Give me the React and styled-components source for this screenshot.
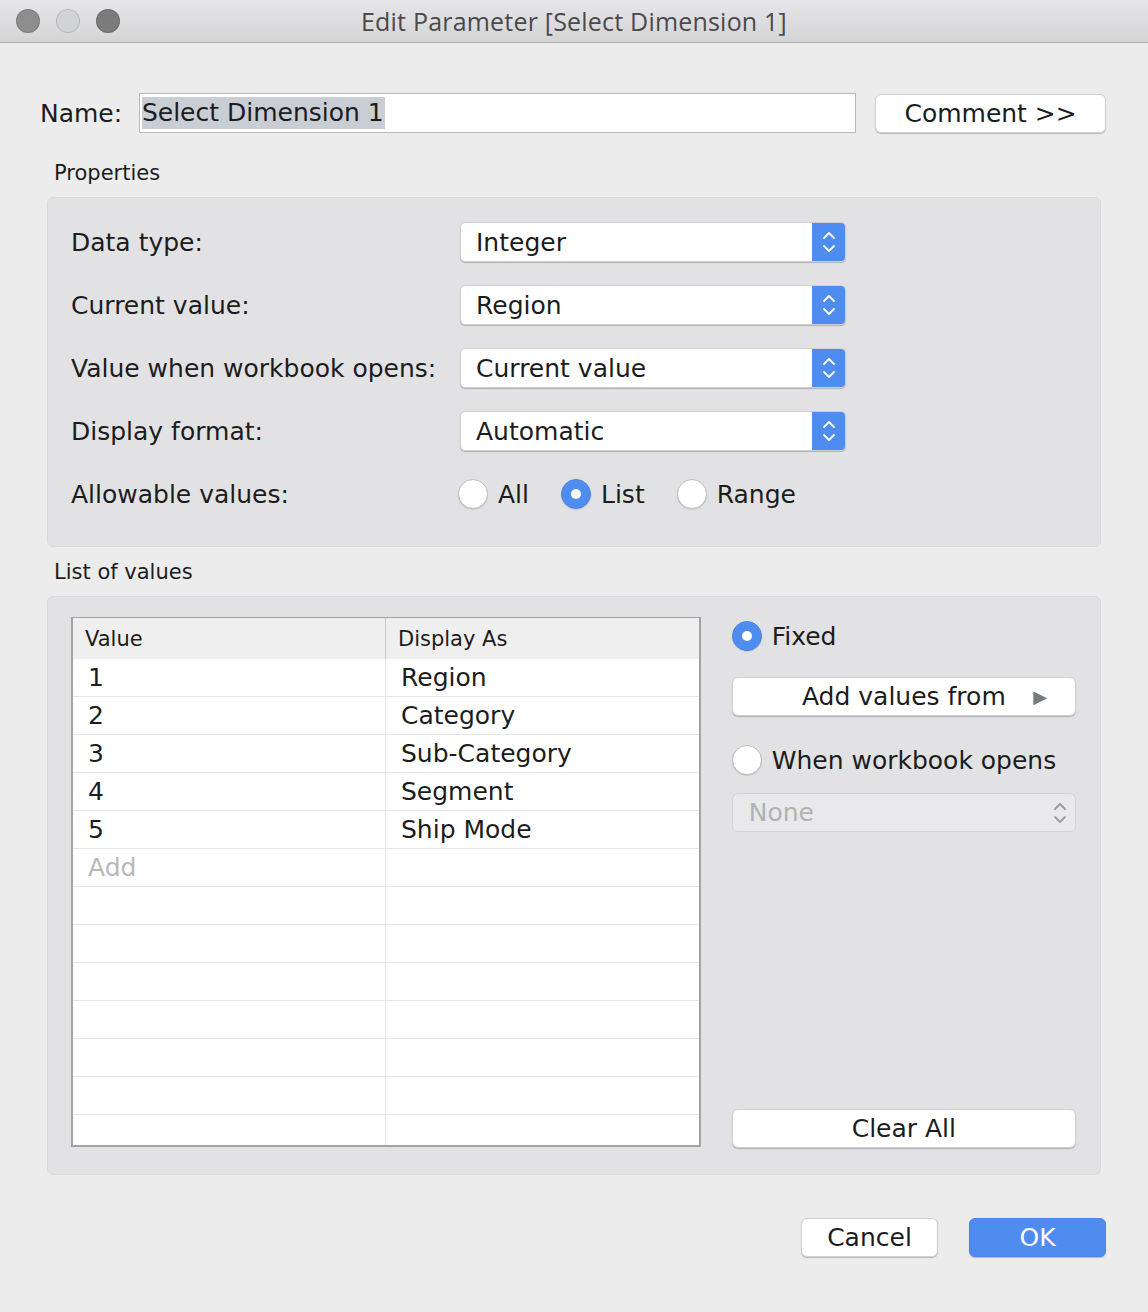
import React from 'react';
import styled, { createGlobalStyle } from 'styled-components';

const GlobalStyle = createGlobalStyle`
  html, body {
    margin: 0;
    padding: 0;
    background: #ececec;
  }
  body {
    font-family: "DejaVu Sans", "Open Sans", sans-serif;
    color: #1c1c1c;
  }
`

const rows = [
  { value: '1', display: 'Region' },
  { value: '2', display: 'Category' },
  { value: '3', display: 'Sub-Category' },
  { value: '4', display: 'Segment' },
  { value: '5', display: 'Ship Mode' },
]

const Chevrons = ({ color }) => (
  <svg width="14" height="26" viewBox="0 0 14 26">
    <path d="M2 9 L7 4 L12 9" fill="none" stroke={color} strokeWidth="1.8" strokeLinecap="round" strokeLinejoin="round" />
    <path d="M2 17 L7 22 L12 17" fill="none" stroke={color} strokeWidth="1.8" strokeLinecap="round" strokeLinejoin="round" />
  </svg>
)

const Select = ({ value }) => (
  <SelectBox>
    <SelectText>{value}</SelectText>
    <Stepper>
      <Chevrons color="#ffffff" />
    </Stepper>
  </SelectBox>
)

const Radio = ({ checked, label }) => (
  <RadioRow>
    <RadioDot checked={checked} />
    <span>{label}</span>
  </RadioRow>
)

const App = () => {
  const empty = Array.from({ length: 7 })

  return (
    <>
      <GlobalStyle />
      <Window>
        <TitleBar>
          <Lights>
            <Light color="#8e8e8e" />
            <Light color="#d2d3d5" />
            <Light color="#7b7b7b" />
          </Lights>
          <Title>Edit Parameter [Select Dimension 1]</Title>
        </TitleBar>

        <Content>
          <NameRow>
            <NameLabel>Name:</NameLabel>
            <NameInput>
              <Selected>Select Dimension 1</Selected>
            </NameInput>
            <Button width="231px">Comment &gt;&gt;</Button>
          </NameRow>

          <SectionLabel top="26px">Properties</SectionLabel>
          <Panel>
            <PropGrid>
              <PropLabel>Data type:</PropLabel>
              <Select value="Integer" />
              <PropLabel>Current value:</PropLabel>
              <Select value="Region" />
              <PropLabel>Value when workbook opens:</PropLabel>
              <Select value="Current value" />
              <PropLabel>Display format:</PropLabel>
              <Select value="Automatic" />
              <PropLabel>Allowable values:</PropLabel>
              <RadioGroup>
                <Radio label="All" />
                <Radio checked label="List" />
                <Radio label="Range" />
              </RadioGroup>
            </PropGrid>
          </Panel>

          <SectionLabel top="11px">List of values</SectionLabel>
          <ListPanel>
            <Table>
              <HeadCell>Value</HeadCell>
              <HeadCell divider>Display As</HeadCell>
              {rows.map(r => (
                <React.Fragment key={r.value}>
                  <Cell>{r.value}</Cell>
                  <Cell divider>{r.display}</Cell>
                </React.Fragment>
              ))}
              <Cell muted>Add</Cell>
              <Cell divider />
              {empty.map((_, i) => (
                <React.Fragment key={i}>
                  <Cell />
                  <Cell divider />
                </React.Fragment>
              ))}
            </Table>

            <SideColumn>
              <Radio checked label="Fixed" />
              <WideButton>
                <span>Add values from</span>
                <Arrow>&#9654;</Arrow>
              </WideButton>
              <Radio label="When workbook opens" />
              <DisabledSelect>
                <span>None</span>
                <Chevrons color="#9a9a9a" />
              </DisabledSelect>
              <ClearButton>Clear All</ClearButton>
            </SideColumn>
          </ListPanel>

          <Footer>
            <Button width="137px">Cancel</Button>
            <Button width="137px" primary>OK</Button>
          </Footer>
        </Content>
      </Window>
    </>
  )
}

export default App;

const Window = styled.div`
  width: 1148px;
  height: 1312px;
  background: #ececec;
  overflow: hidden;
`
const TitleBar = styled.div`
  height: 42px;
  display: flex;
  align-items: center;
  position: relative;
  background: linear-gradient(#e6e6e8, #d4d4d6);
  border-bottom: 1px solid #b2b2b2;
`
const Lights = styled.div`
  display: flex;
  gap: 16px;
  padding-left: 16px;
`
const Light = styled.div`
  width: 24px;
  height: 24px;
  border-radius: 50%;
  background: ${p => p.color};
  box-shadow: inset 0 0 0 1px rgba(0, 0, 0, 0.12);
`
const Title = styled.div`
  position: absolute;
  left: 0;
  right: 0;
  text-align: center;
  font-family: "Open Sans", "Noto Sans", sans-serif;
  font-size: 25px;
  letter-spacing: 0.2px;
  color: #4a4a4a;
  pointer-events: none;
`
const Content = styled.div`
  padding: 50px 47px 0 47px;
`
const NameRow = styled.div`
  display: flex;
  align-items: center;
  margin: 0 -5px 0 -7px;
  height: 40px;
`
const NameLabel = styled.div`
  font-size: 25px;
  width: 99px;
`
const NameInput = styled.div`
  box-sizing: border-box;
  width: 718px;
  height: 40px;
  background: #ffffff;
  border: 1px solid #b9b9b9;
  display: flex;
  align-items: center;
  padding-left: 2px;
  margin-right: 19px;
  font-size: 25px;
`
const Selected = styled.span`
  background: #c9ced5;
  line-height: 32px;
  padding-right: 1px;
`
const Button = styled.div`
  box-sizing: border-box;
  width: ${p => p.width};
  height: 39px;
  display: flex;
  align-items: center;
  justify-content: center;
  border-radius: 6px;
  font-size: 25px;
  background: ${p => (p.primary ? '#4f8cf0' : '#ffffff')};
  color: ${p => (p.primary ? '#ffffff' : '#1c1c1c')};
  border: 1px solid ${p => (p.primary ? '#4a84e6' : '#d0d0d0')};
  box-shadow: 0 1px 1px rgba(0, 0, 0, 0.22);
`
const SectionLabel = styled.div`
  font-size: 21px;
  margin: ${p => p.top} 0 10px 7px;
  line-height: 28px;
`
const Panel = styled.div`
  background: #e2e2e4;
  border: 1px solid #d9d9db;
  border-radius: 6px;
  padding: 24px 23px 32px;
`
const PropGrid = styled.div`
  display: grid;
  grid-template-columns: 389px 386px;
  grid-auto-rows: 40px;
  row-gap: 23px;
  align-items: center;
`
const PropLabel = styled.div`
  font-size: 25px;
`
const SelectBox = styled.div`
  box-sizing: border-box;
  height: 40px;
  display: flex;
  align-items: stretch;
  background: #ffffff;
  border-radius: 5px;
  border: 1px solid #cfcfcf;
  box-shadow: 0 1px 1px rgba(0, 0, 0, 0.22);
  overflow: hidden;
`
const SelectText = styled.div`
  flex: 1;
  display: flex;
  align-items: center;
  padding-left: 15px;
  font-size: 25px;
`
const Stepper = styled.div`
  width: 33px;
  background: #4f8cf0;
  display: flex;
  align-items: center;
  justify-content: center;
`
const RadioGroup = styled.div`
  display: flex;
  gap: 32px;
  margin-left: -2px;
`
const RadioRow = styled.div`
  display: flex;
  align-items: center;
  gap: 10px;
  font-size: 25px;
  height: 32px;
`
const RadioDot = styled.div`
  box-sizing: border-box;
  width: 30px;
  height: 30px;
  border-radius: 50%;
  background: ${p => (p.checked ? '#4f8cf0' : '#ffffff')};
  border: 1px solid ${p => (p.checked ? '#4a84e6' : '#bdbdbd')};
  box-shadow: 0 1px 1px rgba(0, 0, 0, 0.12);
  display: flex;
  align-items: center;
  justify-content: center;
  &::after {
    content: '';
    display: ${p => (p.checked ? 'block' : 'none')};
    width: 10px;
    height: 10px;
    border-radius: 50%;
    background: #ffffff;
  }
`
const ListPanel = styled(Panel)`
  display: flex;
  gap: 31px;
  padding: 20px 24px 27px 23px;
`
const Table = styled.div`
  box-sizing: border-box;
  width: 631px;
  height: 530px;
  border: 2px solid #a3a3a3;
  border-top-width: 1px;
  background: #ffffff;
  display: grid;
  grid-template-columns: 312px 1fr;
  grid-template-rows: 41px;
  grid-auto-rows: 38px;
  overflow: hidden;
`
const HeadCell = styled.div`
  background: #efefef;
  display: flex;
  align-items: center;
  padding-left: 12px;
  font-size: 21px;
  border-left: ${p => (p.divider ? '1px solid #c9c9c9' : 'none')};
`
const Cell = styled.div`
  display: flex;
  align-items: center;
  padding-left: 15px;
  font-size: 25px;
  color: ${p => (p.muted ? '#b8b8b8' : '#1c1c1c')};
  border-bottom: 1px solid #e6e6e6;
  border-left: ${p => (p.divider ? '1px solid #e6e6e6' : 'none')};
`
const SideColumn = styled.div`
  width: 345px;
  display: flex;
  flex-direction: column;
  padding-top: 3px;
`
const WideButton = styled.div`
  box-sizing: border-box;
  height: 39px;
  margin: 25px 0 28px;
  display: flex;
  align-items: center;
  justify-content: center;
  position: relative;
  background: #ffffff;
  border: 1px solid #d0d0d0;
  border-radius: 6px;
  box-shadow: 0 1px 1px rgba(0, 0, 0, 0.22);
  font-size: 25px;
`
const Arrow = styled.span`
  position: absolute;
  right: 28px;
  font-size: 18px;
  color: #7a7a7a;
`
const DisabledSelect = styled.div`
  box-sizing: border-box;
  height: 39px;
  margin-top: 17px;
  display: flex;
  align-items: center;
  justify-content: space-between;
  padding: 0 8px 0 16px;
  background: #e9e9eb;
  border: 1px solid #d3d3d5;
  border-radius: 6px;
  font-size: 25px;
  color: #b2b2b2;
`
const ClearButton = styled(WideButton)`
  margin: auto 0 -1px;
`
const Footer = styled.div`
  display: flex;
  justify-content: flex-end;
  gap: 31px;
  margin: 43px -5px 0 0;
`
